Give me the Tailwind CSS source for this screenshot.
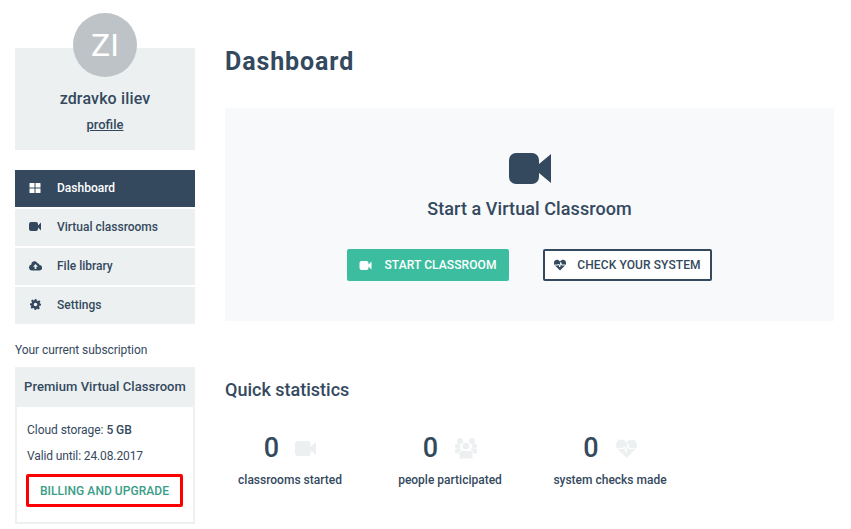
<!DOCTYPE html>
<html lang="en">
<head>
    <meta charset="UTF-8" />
    <meta name="viewport" content="width=device-width, initial-scale=1.0" />
    <title>Dashboard</title>
    <script src="https://cdn.jsdelivr.net/npm/@tailwindcss/browser@4"></script>
</head>
<body class="bg-white h-[529px] overflow-hidden font-['Roboto',sans-serif] text-[#34495e]">
<div class="flex pl-[15px] pr-[17px]">

    <!-- sidebar -->
    <aside class="w-[180px] shrink-0 pt-[13px]">
        <div class="relative mt-[35px] h-[102px] bg-[#ecf0f1] flex flex-col items-center">
            <div class="absolute -top-[35px] w-16 h-16 rounded-full bg-[#bdc3c7] flex items-center justify-center text-white text-[32px] leading-none">ZI</div>
            <div class="mt-[41px] text-base leading-5 font-medium tracking-[0.15px]">zdravko iliev</div>
            <a href="#" class="mt-[8px] text-[13px] leading-4 font-medium underline">profile</a>
        </div>

        <nav class="mt-5 flex flex-col gap-[2px] text-xs font-medium">
            <a href="#" class="h-[37px] pb-[2px] flex items-center bg-[#34495e] text-white">
                <svg class="w-3 h-3 ml-[14px] mr-4" viewBox="0 0 12 12" fill="currentColor"><path d="M.5 1.500Q.5 1 1 1h4.500v4.500H.5zM6.500 1H11q.5 0 .5.5v4h-5zM.5 6.500h5V11H1q-.5 0-.5-.5zM6.500 6.500h5v4q0 .5-.5.5H6.500z"/></svg>
                Dashboard
            </a>
            <a href="#" class="h-[37px] pb-[2px] flex items-center bg-[#ecf0f1]">
                <svg class="w-3 h-[9px] ml-[14px] mr-4" viewBox="0 0 24 18" fill="currentColor"><path d="M4 0h10a4 4 0 0 1 4 4v10a4 4 0 0 1-4 4H4a4 4 0 0 1-4-4V4a4 4 0 0 1 4-4zM18 7l6-6v16l-6-6z"/></svg>
                Virtual classrooms
            </a>
            <a href="#" class="h-[37px] pb-[2px] flex items-center bg-[#ecf0f1]">
                <svg class="w-[13px] h-3 ml-[14px] mr-[15px]" viewBox="0 0 26 24" fill="currentColor"><path fill-rule="evenodd" d="M6 21a6 6 0 0 1-1.500-11.800A6.500 6.500 0 0 1 17 6.500 4 4 0 0 1 21 10a5.500 5.500 0 0 1-.500 11zM13 8l-5 5.500h3.300V18h3.400v-4.500H18z"/></svg>
                File library
            </a>
            <a href="#" class="h-[37px] pb-[2px] flex items-center bg-[#ecf0f1]">
                <svg class="w-[11px] h-[11px] ml-[15px] mr-4" viewBox="0 0 24 24" fill="currentColor"><path fill-rule="evenodd" d="M10 0h4l.700 3.300 2.400 1 2.900-1.800 2.800 2.800-1.800 2.900 1 2.400L24 10v4l-3.300.700-1 2.400 1.800 2.900-2.800 2.800-2.900-1.800-2.400 1L14 24h-4l-.700-3.300-2.400-1-2.900 1.800-2.800-2.800 1.800-2.900-1-2.400L0 14v-4l3.300-.700 1-2.400-1.800-2.900 2.800-2.800 2.900 1.800 2.400-1zM12 8a4 4 0 1 0 0 8 4 4 0 0 0 0-8z"/></svg>
                Settings
            </a>
        </nav>

        <p class="mt-[19px] text-xs leading-[14px] tracking-[-0.08px]">Your current subscription</p>

        <div class="mt-[10px] border-2 border-t-0 border-[#ecf0f1]">
            <div class="-mx-[2px] h-10 pb-px bg-[#ecf0f1] flex items-center justify-center text-[13px] font-medium tracking-[0.05px] whitespace-nowrap">Premium Virtual Classroom</div>
            <div class="pt-[15px] px-[10px] pb-[15px] text-xs">
                <p class="leading-[16px] tracking-[-0.05px]">Cloud storage: <span class="font-medium">5 GB</span></p>
                <p class="mt-[10px] leading-[16px] tracking-[-0.12px]">Valid until: 24.08.2017</p>
                <a href="#" class="mt-[10px] -ml-px h-[33px] flex items-center justify-center border-[3px] border-[#ff0000] text-[#3a9d87] font-medium tracking-[0.05px] rounded-[2px] whitespace-nowrap">BILLING AND UPGRADE</a>
            </div>
        </div>
    </aside>

    <!-- main -->
    <main class="flex-1 ml-[30px]">
        <h1 class="mt-[45px] text-[25px] leading-[34px] font-bold tracking-[0.9px]">Dashboard</h1>

        <section class="mt-[29px] h-[213px] bg-[#f8f9fa] flex flex-col items-center pt-[45px]">
            <svg class="w-[42px] h-[31px]" viewBox="0 0 42 31" fill="currentColor"><path d="M7 0h16a7 7 0 0 1 7 7v17a7 7 0 0 1-7 7H7a7 7 0 0 1-7-7V7a7 7 0 0 1 7-7zM30 11 42 1v29L30 20z"/></svg>
            <h2 class="mt-[13px] text-lg leading-6 font-medium tracking-[0.08px]">Start a Virtual Classroom</h2>
            <div class="mt-[28px] flex gap-[34px] text-xs font-medium tracking-[0.1px]">
                <a href="#" class="w-[162px] h-8 flex items-center justify-center gap-3 bg-[#3dbda0] text-white rounded-[2px]">
                    <svg class="w-[13px] h-[9px]" viewBox="0 0 24 18" fill="currentColor"><path d="M4 0h10a4 4 0 0 1 4 4v10a4 4 0 0 1-4 4H4a4 4 0 0 1-4-4V4a4 4 0 0 1 4-4zM18 7l6-6v16l-6-6z"/></svg>
                    START CLASSROOM
                </a>
                <a href="#" class="w-[169px] h-8 flex items-center justify-center gap-[11px] bg-white border-2 border-[#34495e] rounded-[2px]">
                    <svg class="w-3 h-3" viewBox="0 0 24 22" fill="none"><path fill="currentColor" d="M12 22 2 12C-1 9-.5 4 2 2c3-2.500 7-1.500 10 2 3-3.500 7-4.500 10-2 2.500 2 3 7 0 10z"/><path stroke="#fff" stroke-width="2" d="M2 11h6l1.500-2 2 6 2-9 1.500 5h7"/></svg>
                    CHECK YOUR SYSTEM
                </a>
            </div>
        </section>

        <h2 class="mt-[57px] text-lg leading-6 font-medium">Quick statistics</h2>

        <div class="mt-[30px] flex text-xs font-medium">
            <div class="w-[130px] flex flex-col items-center">
                <div class="flex items-center gap-4 h-8">
                    <span class="text-[27px] leading-8">0</span>
                    <svg class="w-[21px] h-[15px] text-[#ecf0f1]" viewBox="0 0 24 18" preserveAspectRatio="none" fill="currentColor"><path d="M4 0h10a4 4 0 0 1 4 4v10a4 4 0 0 1-4 4H4a4 4 0 0 1-4-4V4a4 4 0 0 1 4-4zM18 7l6-6v16l-6-6z"/></svg>
                </div>
                <p class="mt-[8px] leading-[16px]">classrooms started</p>
            </div>
            <div class="w-[130px] ml-[30px] flex flex-col items-center">
                <div class="flex items-center gap-[17px] h-8">
                    <span class="text-[27px] leading-8">0</span>
                    <svg class="w-[22px] h-[21px] text-[#ecf0f1]" viewBox="0 0 22 21" fill="currentColor"><circle cx="5" cy="3" r="3"/><circle cx="17" cy="3" r="3"/><circle cx="2.500" cy="8" r="2.500"/><circle cx="19.500" cy="8" r="2.500"/><path d="M0 12q0-1.500 2-1.500h4v5H1q-1 0-1-1zM22 12q0-1.500-2-1.500h-4v5h5q1 0 1-1z"/><circle cx="11" cy="8" r="4" stroke="#fff"/><path stroke="#fff" d="M4 15q0-2.500 3-2.500h8q3 0 3 2.500v6H4z"/></svg>
                </div>
                <p class="mt-[8px] leading-[16px]">people participated</p>
            </div>
            <div class="w-[130px] ml-[30px] flex flex-col items-center">
                <div class="flex items-center gap-[17px] h-8">
                    <span class="text-[27px] leading-8">0</span>
                    <svg class="w-[21px] h-[19px] text-[#ecf0f1]" viewBox="0 0 24 22" fill="none"><path fill="currentColor" d="M12 22 2 12C-1 9-.5 4 2 2c3-2.500 7-1.500 10 2 3-3.500 7-4.500 10-2 2.500 2 3 7 0 10z"/><path stroke="#fff" stroke-width="1.200" d="M2 11h6l1.500-2 2 6 2-9 1.500 5h7"/></svg>
                </div>
                <p class="mt-[8px] leading-[16px]">system checks made</p>
            </div>
        </div>
    </main>
</div>
</body>
</html>
